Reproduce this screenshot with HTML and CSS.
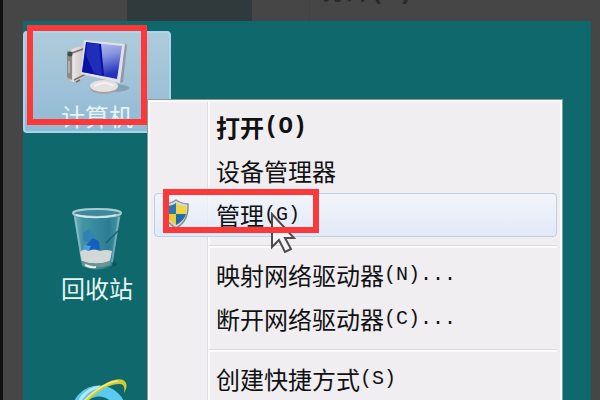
FILE: index.html
```
<!DOCTYPE html>
<html lang="zh-CN">
<head>
    <meta charset="UTF-8">
    <meta name="viewport" content="width=device-width, initial-scale=1.0">
    <title>计算机管理</title>
    <link rel="stylesheet" href="styles.css">
</head>
<body>
    <div class="backdrop">
        <div class="behind">
            <div class="behind-tile"></div>
            <div class="behind-menu">打开<span class="key">(O)</span></div>
        </div>
        <main class="desktop">
            <div class="icons">
                <button class="shortcut selected" type="button">
                    <svg class="picture" width="76" height="68" viewBox="0 -3 76 68" aria-hidden="true">
                        <defs>
                            <linearGradient id="screen" x1="0" y1="0" x2="0.3" y2="1">
                                <stop offset="0" stop-color="#c4cdf4"/>
                                <stop offset="0.5" stop-color="#8793df"/>
                                <stop offset="1" stop-color="#2131bd"/>
                            </linearGradient>
                            <linearGradient id="case" x1="0" y1="0" x2="1" y2="0">
                                <stop offset="0" stop-color="#a9a5a5"/>
                                <stop offset="0.3" stop-color="#e8e3e0"/>
                                <stop offset="1" stop-color="#bcb6b4"/>
                            </linearGradient>
                        </defs>
                        <ellipse cx="54" cy="51" rx="16" ry="4" fill="#68818d" opacity="0.5"/>
                        <path d="M8 14l16-6 6 2v28l-16 7-6-3z" fill="url(#case)"/>
                        <path d="M8 14l5 2v27l-5-3z" fill="#8d8989"/>
                        <path d="M13 16l14-5M15 43l14-7M17 45l4-2" stroke="#77716f" stroke-width="1.5"/>
                        <circle cx="11" cy="17" r="2.5" fill="#36534a"/>
                        <path d="M10 24v12" stroke="#d5d1cf" stroke-width="1"/>
                        <path d="M39 41l14 3 1 6-15-2z" fill="#b9b6b9"/>
                        <ellipse cx="45" cy="51" rx="14" ry="6" fill="#a4a1a5"/>
                        <ellipse cx="45" cy="49" rx="14" ry="6" fill="#e5e1df"/>
                        <path d="M35 49q10-6 20 0" fill="none" stroke="#f4f2f1" stroke-width="2"/>
                        <path d="M65 6l3 2-4 37-4 1z" fill="#9498a4"/>
                        <path d="M25 3l41 4-5 39-39-9z" fill="#e0e0e9"/>
                        <path d="M27 5l36 4-5 33-35-7z" fill="url(#screen)"/>
                        <path d="M27 5l15 2 3 32-22-4z" fill="#0712a5"/>
                        <path d="M28 6l-1 12 8 18 8 2-3-31z" fill="#202db9"/>
                    </svg>
                    <span class="name">计算机</span>
                </button>
                <button class="shortcut" type="button">
                    <svg class="picture" width="76" height="68" viewBox="0 0 76 68" aria-hidden="true">
                        <defs>
                            <linearGradient id="glass" x1="0" y1="0" x2="1" y2="0">
                                <stop offset="0" stop-color="#75b6c4"/>
                                <stop offset="0.2" stop-color="#4294a5"/>
                                <stop offset="0.75" stop-color="#2c7d94"/>
                                <stop offset="1" stop-color="#5099a6"/>
                            </linearGradient>
                        </defs>
                        <ellipse cx="42" cy="58" rx="16" ry="4" fill="#07434b" opacity="0.5"/>
                        <path d="M14 5l48 1-9 54q-15 7-30 0z" fill="url(#glass)"/>
                        <path d="M16 11l7 44M60 11l-7 45" stroke="#a6ced4" stroke-width="2" opacity="0.5"/>
                        <path d="M24 27l7-4 4 7-4 7-7-2z" fill="#3282b4"/>
                        <path d="M28 38l6-6 6 3 1 8-8 4-6-4z" fill="#1460bd"/>
                        <path d="M25 39l7 1-3 6-5-1z" fill="#4d9de1"/>
                        <path d="M59 25L47 37" stroke="#1b606f" stroke-width="1.5"/>
                        <path d="M21 46q4-4 8-1 6-3 12 0 6-2 12 0l-2 10q-14 5-28 0z" fill="#d2d8d5"/>
                        <path d="M23 55q15 6 29-1l-1 5q-14 5-27 0z" fill="#6f9490"/>
                        <path d="M26 59q6 3 11 2" fill="none" stroke="#eef0e6" stroke-width="2"/>
                        <ellipse cx="38" cy="7" rx="24" ry="4" fill="#3c8999" stroke="#a7ccd4" stroke-width="2"/>
                        <path d="M17 9q20 5 40 0" fill="none" stroke="#d4e8e8" stroke-width="1.5"/>
                    </svg>
                    <span class="name">回收站</span>
                </button>
                <button class="shortcut" type="button" aria-label="Internet Explorer">
                    <svg class="picture" width="76" height="68" viewBox="0 0 76 68" aria-hidden="true">
                        <circle cx="40" cy="35" r="22" fill="none" stroke="#5ccaf0" stroke-width="11"/>
                        <path d="M21 22q8-12 20-13" fill="none" stroke="#b6e9f8" stroke-width="3"/>
                        <path d="M26 35h36" stroke="#5ccaf0" stroke-width="9"/>
                        <path d="M8 46C18 22 52-4 64 2c5 3 4 8 1 13 1-6 0-9-5-9C44 6 26 24 8 46z" fill="#d0cc35"/>
                        <path d="M20 28Q43 4 59 3" fill="none" stroke="#f3ec91" stroke-width="1.5"/>
                    </svg>
                </button>
            </div>

            <div class="menu" role="menu">
                <button class="item default" type="button" role="menuitem">打开<span class="key">(O)</span></button>
                <button class="item" type="button" role="menuitem">设备管理器</button>
                <button class="item active" type="button" role="menuitem">
                    <svg class="shield" width="28" height="30" viewBox="0 0 28 30" aria-hidden="true">
                        <path d="M14 1q6 4 12 4 1 17-12 24Q1 22 2 5q6 0 12-4z" fill="#d5dcda" stroke="#858f91" stroke-width="1.5"/>
                        <path d="M14 4v11H4q-1-4 0-8 6 0 10-3z" fill="#2878b2"/>
                        <path d="M14 4q4 3 10 3 1 4 0 8H14z" fill="#efd448"/>
                        <path d="M4 15h10v11Q6 22 4 15z" fill="#e8cd3b"/>
                        <path d="M14 15h10q-2 7-10 11z" fill="#206ca8"/>
                    </svg>
                    管理<span class="key">(G)</span>
                </button>
                <hr class="line">
                <button class="item" type="button" role="menuitem">映射网络驱动器<span class="key">(N)...</span></button>
                <button class="item" type="button" role="menuitem">断开网络驱动器<span class="key">(C)...</span></button>
                <hr class="line">
                <button class="item" type="button" role="menuitem">创建快捷方式<span class="key">(S)</span></button>
            </div>

            <svg class="cursor" width="26" height="42" viewBox="0 0 26 42" aria-hidden="true">
                <path d="M2 2v33l7-7 6 12 6-3-6-11h9z" fill="#f4f4f5" stroke="#4b4b50" stroke-width="2"/>
            </svg>
            <div class="mark mark-computer"></div>
            <div class="mark mark-manage"></div>
        </main>
    </div>
</body>
</html>
```

FILE: styles.css
```
*{
    box-sizing: border-box;
    padding: 0;
    margin: 0;
}
body{
    font-family: "Noto Sans CJK SC", sans-serif;
    font-size: 24px;
    line-height: 28px;
    background-color: #464646;
    overflow: hidden;
}
button{
    font: inherit;
    color: inherit;
    background: none;
    border: none;
}
.backdrop{
    height: 100vh;
    display: flex;
    flex-direction: column;
    border-left: 3px solid #101010;
    padding: 0 9px 0 20px;
}
/* dimmed copy of the desktop above the window */
.behind{
    position: relative;
    height: 21px;
    flex-shrink: 0;
    padding-left: 104px;
}
.behind-tile{
    width: 125px;
    height: 100%;
    background-color: #303a3c;
}
.behind-menu{
    position: absolute;
    left: 286px;
    bottom: 0;
    height: 42px;
    padding-left: 12px;
    border-left: 1px solid #414141;
    color: #292929;
    font-weight: bold;
    line-height: 20px;
}
.desktop{
    position: relative;
    flex: 1;
    min-height: 0;
    overflow: hidden;
    background-color: #0f686c;
}
.icons{
    display: flex;
    flex-direction: column;
    align-items: flex-start;
    gap: 70px;
    padding-top: 10px;
}
.shortcut{
    width: 148px;
    display: flex;
    flex-direction: column;
    align-items: center;
    padding: 1px 0;
    border: 2px solid transparent;
    border-radius: 4px;
    color: #e4f5f3;
}
.shortcut.selected{
    border-color: #a9d4ed;
    background: linear-gradient(#aecbdb, #91bad5);
}
.picture{
    display: block;
}
.menu{
    position: absolute;
    left: 124px;
    right: 28px;
    top: 78px;
    padding: 5px 5px 5px 6px;
    border: 1px solid #899a9a;
    box-shadow: inset 0 0 0 2px #f9f9fa;
    background: linear-gradient(to right, transparent 59px, #dddde1 59px, #dddde1 60px, #fafafa 60px, #fafafa 62px, transparent 62px) #f0eef1;
    color: #111;
}
.item{
    display: flex;
    align-items: center;
    position: relative;
    width: 100%;
    height: 44px;
    padding-left: 61px;
    border: 1px solid transparent;
    border-radius: 4px;
    line-height: 40px;
    text-align: left;
    white-space: nowrap;
}
.item.default{
    font-weight: bold;
}
.item.active{
    border-color: #bdd0e3;
    background: linear-gradient(rgba(243, 246, 252, 0.8), rgba(222, 232, 249, 0.8));
}
.key{
    font-family: "Liberation Mono", monospace;
    font-size: 20px;
}
.default .key,
.behind-menu .key{
    font-size: 24px;
}
.shield{
    position: absolute;
    left: 7px;
    top: 5px;
}
.line{
    height: 3px;
    margin: 8px 0 5px 55px;
    border: none;
    border-top: 1px solid #dcdce0;
    background-color: #fbfbfc;
}
.cursor{
    position: absolute;
    left: 247px;
    top: 191px;
}
.mark{
    position: absolute;
    border: 6px solid #fc3838;
}
.mark-computer{
    left: 4px;
    top: 4px;
    width: 120px;
    height: 100px;
}
.mark-manage{
    left: 140px;
    top: 168px;
    width: 156px;
    height: 44px;
}
```
